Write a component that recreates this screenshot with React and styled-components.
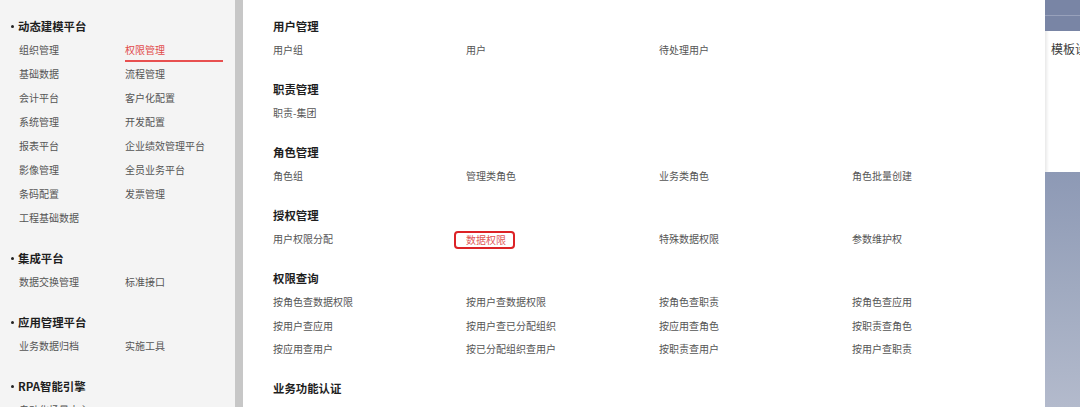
import React from 'react';
import styled, { createGlobalStyle } from 'styled-components';

const GlobalStyle = createGlobalStyle`
  html, body {
    margin: 0;
    padding: 0;
    background: #ffffff;
  }
  body {
    font-family: "Noto Sans CJK SC", "Noto Sans", "Liberation Sans", sans-serif;
    overflow: hidden;
  }
`;

const sideSections = [
  {
    title: '动态建模平台',
    items: [
      '组织管理', '权限管理', '基础数据', '流程管理', '会计平台', '客户化配置',
      '系统管理', '开发配置', '报表平台', '企业绩效管理平台', '影像管理', '全员业务平台',
      '条码配置', '发票管理', '工程基础数据',
    ],
    active: '权限管理',
  },
  { title: '集成平台', items: ['数据交换管理', '标准接口'] },
  { title: '应用管理平台', items: ['业务数据归档', '实施工具'] },
  { title: 'RPA智能引擎', items: ['自动化场景中心'] },
];

const mainSections = [
  { title: '用户管理', items: ['用户组', '用户', '待处理用户'] },
  { title: '职责管理', items: ['职责-集团'] },
  { title: '角色管理', items: ['角色组', '管理类角色', '业务类角色', '角色批量创建'] },
  { title: '授权管理', items: ['用户权限分配', '数据权限', '特殊数据权限', '参数维护权'], marked: '数据权限' },
  {
    title: '权限查询',
    items: [
      '按角色查数据权限', '按用户查数据权限', '按角色查职责', '按角色查应用',
      '按用户查应用', '按用户查已分配组织', '按应用查角色', '按职责查角色',
      '按应用查用户', '按已分配组织查用户', '按职责查用户', '按用户查职责',
    ],
  },
  { title: '业务功能认证', items: [] },
];

const Page = styled.div`
  display: flex;
  width: 1080px;
  height: 407px;
  overflow: hidden;
`;

const Sidebar = styled.aside`
  width: 235px;
  flex-shrink: 0;
  background: #f4f4f4;
  padding-top: 14px;
  box-sizing: border-box;
`;

const SideSection = styled.section`
  margin-bottom: 16px;
`;

const SideTitle = styled.div`
  display: flex;
  align-items: center;
  height: 24px;
  padding-left: 11px;
  font-size: 11.4px;
  font-weight: 700;
  color: #1e1e1e;

  &::before {
    content: '';
    width: 3px;
    height: 3px;
    border-radius: 50%;
    background: #222;
    margin-right: 4px;
  }
`;

const SideGrid = styled.div`
  display: grid;
  grid-template-columns: 106px 104px;
  padding-left: 19px;
`;

const SideItem = styled.div`
  width: 98px;
  height: 24px;
  line-height: 24px;
  font-size: 10px;
  white-space: nowrap;
  color: ${(p) => (p.$active ? '#e24b4b' : '#555555')};
  box-shadow: ${(p) => (p.$active ? 'inset 0 -2px 0 #e85050' : 'none')};
`;

const ScrollTrack = styled.div`
  width: 8px;
  flex-shrink: 0;
  background: #c7c7c7;
`;

const Main = styled.main`
  flex: 1;
  background: #ffffff;
  padding: 14px 0 0 30px;
  box-sizing: border-box;
`;

const MainSection = styled.section`
  margin-bottom: 15.5px;
`;

const MainTitle = styled.div`
  height: 24px;
  line-height: 24px;
  font-size: 11.4px;
  font-weight: 700;
  color: #1e1e1e;
`;

const MainGrid = styled.div`
  display: grid;
  grid-template-columns: repeat(4, 193px);
`;

const MainItem = styled.div`
  height: 23.5px;
  line-height: 23.5px;
  font-size: 10px;
  color: #555555;
  white-space: nowrap;
`;

const Marked = styled.span`
  display: inline-block;
  line-height: 14px;
  padding: 0 7px 0 10px;
  margin-left: -10px;
  color: #e05656;
  outline: 2px solid #dc2226;
  border-radius: 2px;
  vertical-align: middle;
`;

const RightStrip = styled.div`
  width: 35px;
  flex-shrink: 0;
  display: flex;
  flex-direction: column;
  overflow: hidden;
`;

const StripBar = styled.div`
  height: 31px;
  background: #7985a5;
  display: flex;
  flex-direction: column;
`;

const StripLine = styled.div`
  height: 15px;
  border-bottom: 1px solid #98a1bb;
`;

const StripPanel = styled.div`
  height: 132px;
  background: linear-gradient(to right, #e9e9e9 0, #ffffff 4px);
  padding: 9px 0 0 6px;
  font-size: 12px;
  color: #3a3a3a;
  white-space: nowrap;
`;

const StripBackdrop = styled.div`
  flex: 1;
  background: linear-gradient(to bottom, #8d99b5 0%, #a0aac0 50%, #b3bacc 100%);
`;

export default function App() {
  return (
    <>
      <GlobalStyle />
      <Page>
        <Sidebar>
          {sideSections.map((s) => (
            <SideSection key={s.title}>
              <SideTitle>{s.title}</SideTitle>
              <SideGrid>
                {s.items.map((it) => (
                  <SideItem key={it} $active={it === s.active}>
                    {it}
                  </SideItem>
                ))}
              </SideGrid>
            </SideSection>
          ))}
        </Sidebar>
        <ScrollTrack />
        <Main>
          {mainSections.map((s) => (
            <MainSection key={s.title}>
              <MainTitle>{s.title}</MainTitle>
              {s.items.length > 0 && (
                <MainGrid>
                  {s.items.map((it) => (
                    <MainItem key={it}>
                      {it === s.marked ? <Marked>{it}</Marked> : it}
                    </MainItem>
                  ))}
                </MainGrid>
              )}
            </MainSection>
          ))}
        </Main>
        <RightStrip>
          <StripBar>
            <StripLine />
          </StripBar>
          <StripPanel>模板设置</StripPanel>
          <StripBackdrop />
        </RightStrip>
      </Page>
    </>
  );
}
